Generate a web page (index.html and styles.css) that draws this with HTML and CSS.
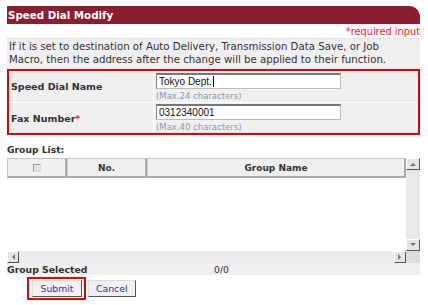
FILE: index.html
```html
<!DOCTYPE html>
<html>
<head>
<meta charset="utf-8">
<link rel="stylesheet" href="styles.css">
</head>
<body>
<div class="page">
  <div class="title">Speed Dial Modify</div>
  <div class="required">*required input</div>
  <div class="info">If it is set to destination of Auto Delivery, Transmission Data Save, or Job Macro, then the address after the change will be applied to their function.</div>
  <div class="form-box">
    <table class="form">
      <tr class="row1">
        <th>Speed Dial Name</th>
        <td><div class="input">Tokyo Dept.<span class="caret"></span></div><div class="hint">(Max.24 characters)</div></td>
      </tr>
      <tr class="row2">
        <th>Fax Number<span class="star">*</span></th>
        <td><div class="input">0312340001</div><div class="hint">(Max.40 characters)</div></td>
      </tr>
    </table>
  </div>
  <div class="group-label">Group List:</div>
  <div class="grid">
    <div class="grid-top">
      <div class="grid-main">
        <div class="grid-head">
          <div class="hc c1"><span class="chk"></span></div>
          <div class="hc c2">No.</div>
          <div class="hc c3">Group Name</div>
        </div>
        <div class="grid-body"></div>
      </div>
      <div class="vscroll">
        <div class="sbtn"><svg width="6" height="4" viewBox="0 0 6 4"><path d="M0 4 L3 1 L6 4 Z" fill="#777"/></svg></div>
        <div class="vtrack"></div>
        <div class="sbtn"><svg width="6" height="4" viewBox="0 0 6 4"><path d="M0 0 L3 3 L6 0 Z" fill="#777"/></svg></div>
      </div>
    </div>
    <div class="hscroll">
      <div class="sbtn h"><svg width="4" height="6" viewBox="0 0 4 6"><path d="M4 0 L1 3 L4 6 Z" fill="#777"/></svg></div>
      <div class="htrack"></div>
      <div class="sbtn h"><svg width="4" height="6" viewBox="0 0 4 6"><path d="M0 0 L3 3 L0 6 Z" fill="#777"/></svg></div>
      <div class="corner"></div>
    </div>
  </div>
  <div class="selected"><span class="sel-label">Group Selected</span><span class="sel-val">0/0</span></div>
  <div class="buttons">
    <div class="focus"><button class="btn">Submit</button></div>
    <button class="btn">Cancel</button>
  </div>
</div>
</body>
</html>
```
FILE: styles.css
```css
html, body { margin: 0; padding: 0; background: #fff; }
body { font-family: "DejaVu Sans", Verdana, sans-serif; font-size: 9px; color: #333; }
.page { width: 413px; padding: 6px 0 0 7px; }
.title {
  height: 18px; line-height: 18px; background: #8b1e2f; color: #fff;
  font-weight: bold; font-size: 10.3px; padding-left: 1px;
  border-top-right-radius: 11px;
}
.required { height: 14px; line-height: 15px; text-align: right; color: #ff2020; font-size: 9.8px; }
.info {
  background: #efefef; padding: 1px 20px 1px 2px; height: 27px;
  line-height: 13px; font-size: 10.2px; color: #333; border-top: 1px solid #e4e4e4;
}
.form-box { border: 2px solid #e60000; margin-top: 1px; }
.form { width: 100%; border-collapse: collapse; }
.form th, .form td { background: #efefef; padding: 0; vertical-align: middle; }
.form tr.row1 th, .form tr.row1 td { border-bottom: 1px solid #fff; height: 31px; }
.form tr.row2 th, .form tr.row2 td { height: 30px; }
.form th { text-align: left; font-weight: bold; width: 142px; padding-left: 2px; border-right: 1px solid #fff; font-size: 9.5px; color: #333; }
.form td { padding-left: 2px; }
.star { color: #ff2020; }
.input {
  width: 181px; height: 13px; background: #fff; border: 1px solid #bbb; border-top: 2px solid #777; border-left: 1px solid #888;
  font-family: "Liberation Sans", Arial, sans-serif; font-size: 10px; line-height: 13px; padding-left: 2px; color: #111;
}
.caret { display: inline-block; width: 1px; height: 11px; background: #000; vertical-align: middle; margin-left: 1px; }
.hint { color: #8a9bb0; font-size: 8.5px; margin-top: 2px; line-height: 10px; }
.group-label { font-weight: bold; margin-top: 10px; line-height: 9px; height: 13px; font-size: 9.2px; }
.grid { margin-top: 0; }
.grid-top { display: flex; height: 93px; }
.grid-main { width: 399px; display: flex; flex-direction: column; }
.grid-head { display: flex; height: 20px; }
.hc {
  background: #efefef; border: 1px solid #c8c8c8; border-bottom: 2px solid #aaa; border-right: 2px solid #aaa;
  box-sizing: border-box; display: flex; align-items: center; justify-content: center; font-weight: bold; font-size: 9px;
}
.c1 { width: 60px; }
.c2 { width: 80px; }
.c3 { flex: 1; }
.chk { width: 6px; height: 6px; border: 1px solid #999; border-right-color: #ddd; border-bottom-color: #ddd; background: #e4e4e4; }
.grid-body { flex: 1; background: #fff; }
.vscroll { width: 14px; background: #e9e9e9; display: flex; flex-direction: column; }
.vtrack { flex: 1; }
.sbtn {
  width: 12px; height: 10px; box-sizing: content-box; background: #e6e6e6;
  border: 1px solid; border-color: #fff #555 #555 #fff; display: flex; align-items: center; justify-content: center;
}
.hscroll { display: flex; height: 12px; background: #ececec; }
.sbtn.h { width: 10px; height: 10px; }
.htrack { flex: 1; }
.corner { width: 14px; background: #ddd; }
.selected { display: flex; height: 12px; line-height: 13px; background: #efefef; }
.sel-label { width: 207px; font-weight: bold; font-size: 9.3px; }
.sel-val { font-size: 9.3px; }
.buttons { display: flex; align-items: center; gap: 2px; margin-top: 2px; padding-left: 20px; }
.focus { border: 2px solid #e60000; padding: 1px 2px 1px 3px; display: flex; }
.btn {
  font-family: "DejaVu Sans", Verdana, sans-serif; font-size: 9.3px; color: #33339a;
  background: #f0f0f0; border: 1px solid; border-color: #ddd #555 #555 #ddd;
  height: 17px; padding: 0 7px; margin: 0; line-height: 14px;
}
.focus .btn { width: 50px; }
```
